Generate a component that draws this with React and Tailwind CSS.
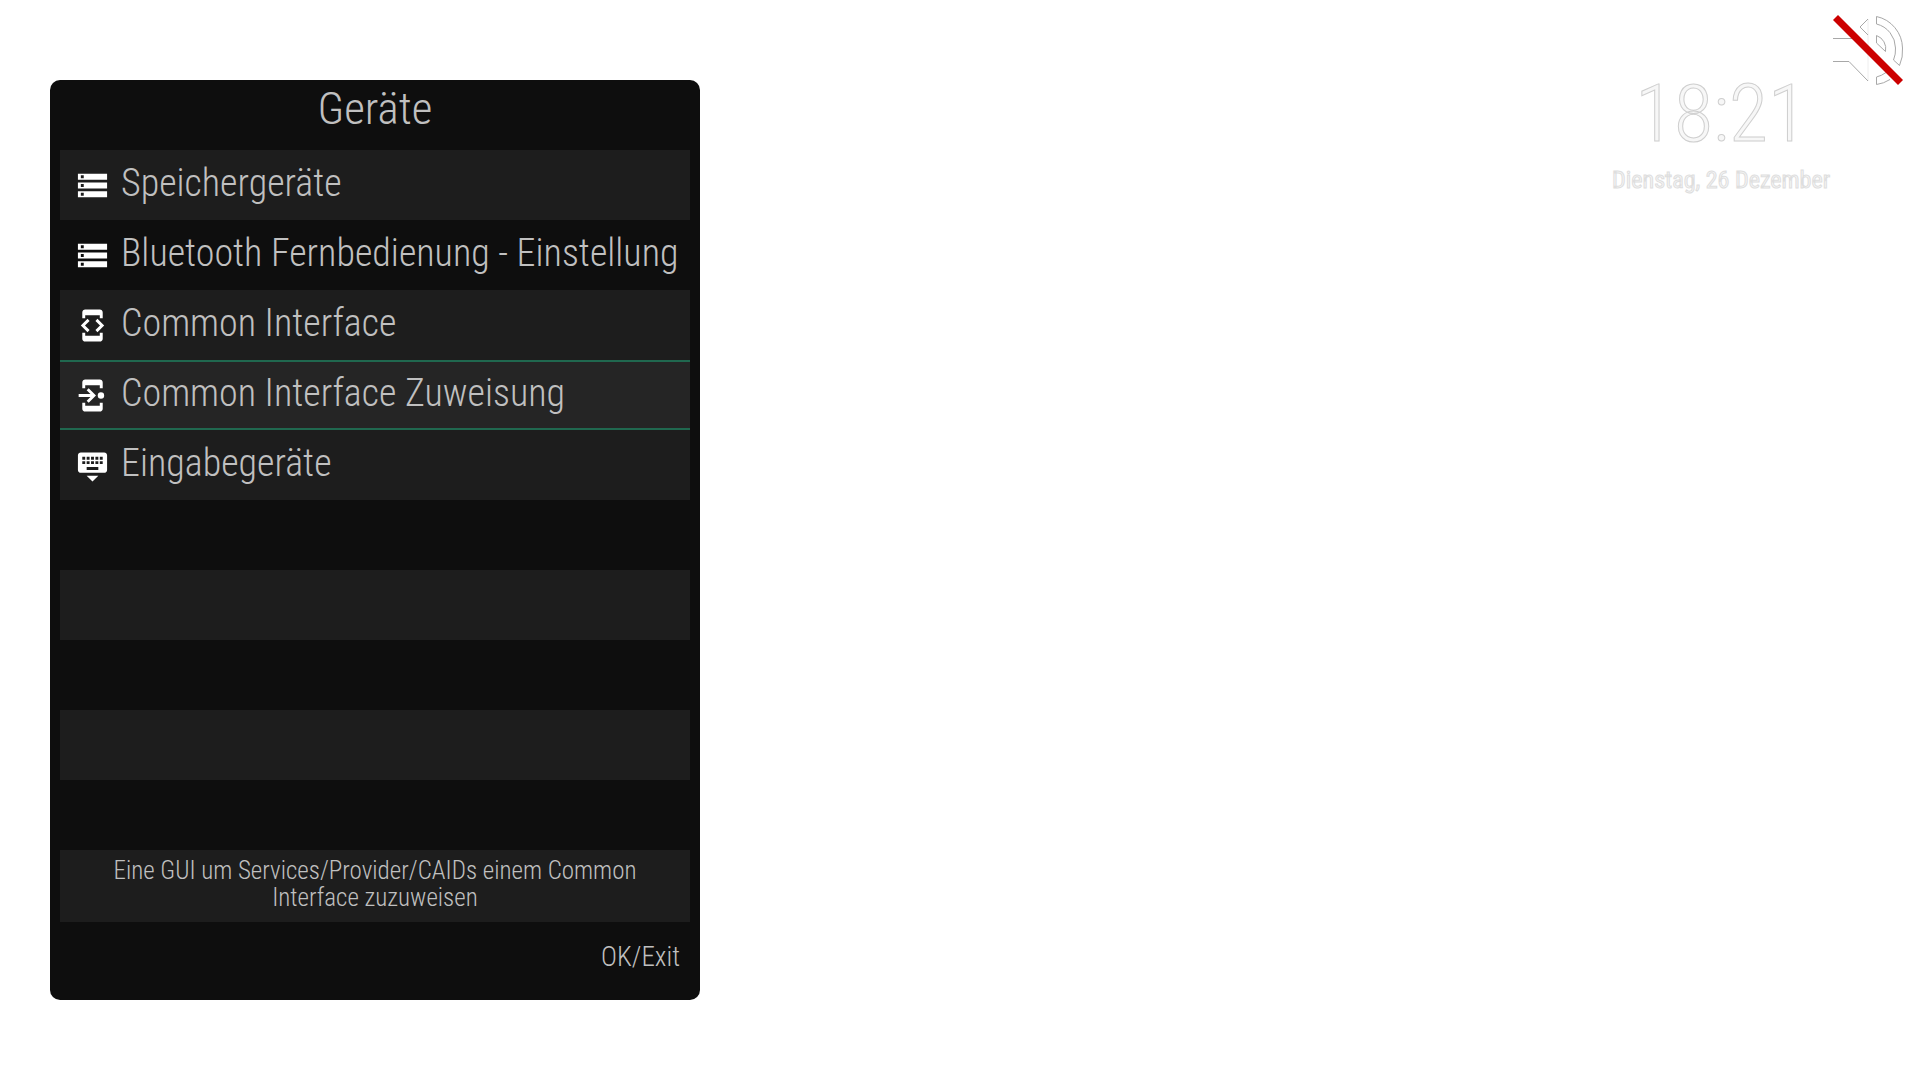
import React from "react";
import clsx from "clsx";
import { MdDeveloperMode, MdKeyboardHide, MdStorage } from "react-icons/md";

const menuItems = [
  { title: "Speichergeräte", icon: MdStorage },
  { title: "Bluetooth Fernbedienung - Einstellung", icon: MdStorage },
  { title: "Common Interface", icon: MdDeveloperMode },
  { title: "Common Interface Zuweisung", icon: AssignIcon, selected: true },
  { title: "Eingabegeräte", icon: MdKeyboardHide },
];

// The list always shows ten rows, unused ones stay empty
const emptyRows = [5, 6, 7, 8, 9];

export default function App() {
  return (
    <div className="flex min-h-screen items-start justify-between bg-white pl-[50px] font-['Roboto_Condensed','Roboto',sans-serif] text-[#c0c0c0]">
      <main className="mt-20 w-[650px] rounded-[10px] bg-[#0e0e0e] px-[10px]">
        <h1 className="pb-3 text-center text-[45px] leading-[58px] font-[350]">
          Geräte
        </h1>

        <ul>
          {menuItems.map((item, index) => (
            <MenuRow key={item.title} item={item} striped={index % 2 === 0} />
          ))}
          {emptyRows.map((index) => (
            <li
              key={index}
              className={clsx("h-[70px]", index % 2 === 0 && "bg-[#1d1d1d]")}
            />
          ))}
        </ul>

        <p className="bg-[#1d1d1d] px-10 pt-[7px] pb-[11px] text-center text-[25px] leading-[27px] font-[350]">
          Eine GUI um Services/Provider/CAIDs einem Common Interface zuzuweisen
        </p>

        <footer className="flex justify-end px-[10px] pt-[17px] pb-[25px]">
          <button type="button" className="text-[27px] leading-9 font-[350]">
            OK/Exit
          </button>
        </footer>
      </main>

      <aside className="flex items-start">
        <Clock />
        <MuteIcon className="mt-2 mr-[10px] size-20" />
      </aside>
    </div>
  );
}

function MenuRow({ item, striped }) {
  return (
    <li>
      <button
        type="button"
        className={clsx(
          "flex h-[70px] w-full items-center gap-[11px] border-y-2 pl-[15px] text-left",
          item.selected && "border-[#20684f] bg-[#252525]",
          !item.selected && "border-transparent",
          !item.selected && striped && "bg-[#1d1d1d]"
        )}
      >
        <item.icon className="size-[35px] shrink-0 text-white" />
        <span className="pb-1 text-[38px] leading-[54px] font-[350] whitespace-nowrap">
          {item.title}
        </span>
      </button>
    </li>
  );
}

function Clock() {
  return (
    <div className="flex flex-col items-center gap-3 pt-[74px] text-[#f7f7f7]">
      <time className="text-[80px] leading-20 font-[350] [-webkit-text-stroke:1px_#cfcfcf]">
        18:21
      </time>
      <span className="text-[24px] leading-7 [-webkit-text-stroke:1px_#dedede]">
        Dienstag, 26 Dezember
      </span>
    </div>
  );
}

function AssignIcon({ className }) {
  return (
    <svg viewBox="0 0 24 24" fill="currentColor" className={className}>
      <path d="M7 5h10v2h2V3c0-1.1-.9-2-2-2H7c-1.1 0-2 .9-2 2v4h2V5zM17 19H7v-2H5v4c0 1.1.9 2 2 2h10c1.1 0 2-.9 2-2v-4h-2v2z" />
      <path d="M2.5 11h8.1L8 8.4 9.4 7l5 5-5 5L8 15.6l2.600-2.600H2.500z" />
      <circle cx="17.800" cy="12" r="2.200" />
    </svg>
  );
}

function MuteIcon({ className }) {
  return (
    <svg viewBox="0 0 80 80" fill="none" className={className}>
      <path d="M38 11v62" stroke="#eeeeee" />
      <g stroke="#a8a8a8">
        <path d="M3 30.500h19M3 53.500h16l19 19.500M38 11l-8 8 8 8" />
        <path d="M46.500 8.500A33 33 0 0 1 72.500 40A36 36 0 0 1 69.500 57.500L63.500 52A27 27 0 0 0 65.500 40A25 25 0 0 0 46.500 16z" />
        <path d="M46.500 27.500A14 14 0 0 1 55.500 43.500L46.500 35z" />
        <path d="M60 71.500A33 33 0 0 1 46.500 76.500V69A26 26 0 0 0 56 64.500" />
      </g>
      <path d="M5.500 9.500L70.500 74.500" stroke="#cc0000" strokeWidth="7" />
    </svg>
  );
}
